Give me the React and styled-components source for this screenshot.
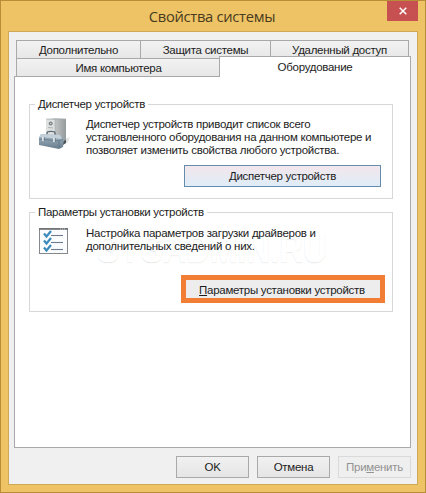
import React from 'react';
import styled, { createGlobalStyle } from 'styled-components';

const App = () => {
  return (
    <>
      <GlobalStyle />
      <Window>
        <TitleBar>
          <Title>Свойства системы</Title>
          <CloseButton aria-label="Закрыть">
            <svg width="8" height="8" viewBox="0 0 8 8">
              <path d="M0.7 0.7L7.3 7.3M7.3 0.7L0.7 7.3" stroke="#fff" strokeWidth="1.5" />
            </svg>
          </CloseButton>
        </TitleBar>
        <Client>
          <BackTabs>
            <Tab $width={124}>Дополнительно</Tab>
            <Tab $width={130}>Защита системы</Tab>
            <Tab $width={139}>Удаленный доступ</Tab>
          </BackTabs>
          <FrontTabs>
            <Tab $width={204}>Имя компьютера</Tab>
            <ActiveTab>Оборудование</ActiveTab>
          </FrontTabs>
          <Panel>
            <Group $height={95}>
              <Legend>Диспетчер устройств</Legend>
              <Info>
                <IconBox><DeviceIcon /></IconBox>
                <Description>
                  Диспетчер устройств приводит список всего<br />
                  установленного оборудования на данном компьютере и<br />
                  позволяет изменить свойства любого устройства.
                </Description>
              </Info>
              <Actions>
                <Button $width={197} $primary>Диспетчер устройств</Button>
              </Actions>
            </Group>
            <Group $height={100}>
              <Legend>Параметры установки устройств</Legend>
              <Watermark>SYSADMIN.RU</Watermark>
              <Info $top={7}>
                <IconBox $top={2}><ChecklistIcon /></IconBox>
                <Description>
                  Настройка параметров загрузки драйверов и<br />
                  дополнительных сведений о них.
                </Description>
              </Info>
              <HighlightActions>
                <Highlight>
                  <span><u>П</u>араметры установки устройств</span>
                </Highlight>
              </HighlightActions>
            </Group>
          </Panel>
          <Footer>
            <Button $width={73}>OK</Button>
            <Button $width={73}>Отмена</Button>
            <Button $width={73} disabled><span>При<u>м</u>енить</span></Button>
          </Footer>
        </Client>
      </Window>
    </>
  )
}

export default App;

// Server tower with a toolbox in front of it
const DeviceIcon = () => (
  <svg width="33" height="34" viewBox="0 0 33 34">
    <defs>
      <linearGradient id="tower" x1="0" x2="1">
        <stop offset="0" stopColor="#d5d8d8" />
        <stop offset="0.55" stopColor="#b9bdbe" />
        <stop offset="1" stopColor="#94999b" />
      </linearGradient>
      <linearGradient id="toolbox" x1="0" x2="0" y1="0" y2="1">
        <stop offset="0" stopColor="#a9bac7" />
        <stop offset="1" stopColor="#667b8b" />
      </linearGradient>
    </defs>
    <path d="M27 22L32 20L30 25L27 27Z" fill="#e2e4e4" />
    <path d="M8 2L17 1L28 2V25L20 28L8 25Z" fill="url(#tower)" />
    <path d="M8 2L17 2.5V27L8 25Z" fill="#dfe1e0" />
    <path d="M8 2L17 2.5L28 2M17 2.5V27" fill="none" stroke="#a5abad" strokeWidth="0.6" />
    <circle cx="12.7" cy="6.5" r="2" fill="#7c8384" />
    <circle cx="12.7" cy="6.5" r="0.8" fill="#c9cfc9" />
    <path d="M10 10.5L15 11" stroke="#aeb3b3" />
    <path d="M25 24L28 23V26L25 28Z" fill="#4d5357" />
    <path d="M9 18V16C9 13.8 17 13.8 17 16V19" fill="none" stroke="#5c6a75" strokeWidth="1.4" />
    <path d="M3 17L22 18L26 22L25 30L21 32L1 28V21Z" fill="url(#toolbox)" />
    <path d="M3 17L22 18L24 22L1 20Z" fill="#c3d0d9" />
    <path d="M1 22L21 24L25 22M21 24V31" fill="none" stroke="#607484" strokeWidth="0.8" />
    <path d="M5 20V24M16 21V25" stroke="#eef2f4" strokeWidth="1.6" />
    <path d="M6.3 20V24M17.3 21V25" stroke="#607484" strokeWidth="0.7" />
  </svg>
);

const ChecklistIcon = () => (
  <svg width="31" height="27" viewBox="0 0 31 27">
    <rect x="1.5" y="0.5" width="28" height="25" fill="#fbfcfd" stroke="#85898d" />
    <path d="M1 1H30" stroke="#6c7074" strokeWidth="1.6" />
    <path d="M22 1H28" stroke="#c9ccce" strokeWidth="0.9" strokeDasharray="1 1" />
    {[7, 14, 21].map((y) => (
      <g key={y}>
        <path d={`M6 ${y - 1.5}L8.5 ${y + 1.5}L13 ${y - 4}`} fill="none" stroke="#3b8abb" strokeWidth="2.2" />
        <path d={`M13 ${y + 0.5}H25`} stroke="#6d7a91" strokeWidth="1.1" />
      </g>
    ))}
  </svg>
);

const GlobalStyle = createGlobalStyle`
  * {
    box-sizing: border-box;
  }
  body {
    margin: 0;
    overflow: hidden;
    font-family: "Liberation Sans", Arial, sans-serif;
    font-size: 11.5px;
    letter-spacing: -0.28px;
    color: #1c1c1c;
  }
`;

const Window = styled.div`
  width: 426px;
  height: 493px;
  display: flex;
  flex-direction: column;
  padding: 0 7px 7px;
  background: #eec365;
  border: 1px solid #b78d38;
`;

const TitleBar = styled.header`
  position: relative;
  height: 30px;
  flex: none;
  display: flex;
  justify-content: center;
`;

const Title = styled.h1`
  margin: 0;
  padding-right: 2px;
  font: 400 14.7px/30px "Open Sans", sans-serif;
  white-space: nowrap;
  color: #493b20;
`;

const CloseButton = styled.button`
  position: absolute;
  top: 0;
  right: 0;
  width: 31px;
  height: 20px;
  padding: 0;
  display: flex;
  align-items: center;
  justify-content: center;
  background: #c75050;
  border: none;
`;

const Client = styled.main`
  flex: 1;
  display: flex;
  flex-direction: column;
  padding: 8px 6px 0 5px;
  background: #f0f0f0;
  border: 1px solid #cfa957;
`;

const BackTabs = styled.div`
  display: flex;
  height: 18px;
  padding-left: 2px;
`;

const FrontTabs = styled.div`
  display: flex;
  height: 18px;
  padding-left: 2px;
`;

const Tab = styled.div`
  width: ${({ $width }) => $width}px;
  flex: none;
  display: flex;
  align-items: center;
  justify-content: center;
  background: linear-gradient(#f2f2f2, #e7e7e7);
  border: 1px solid #a9a9ac;
  border-right-width: 0;
  border-bottom: none;
  white-space: nowrap;
  &:last-child {
    border-right-width: 1px;
  }
`;

const ActiveTab = styled.div`
  flex: 1;
  height: 21px;
  margin: -2px 0 0 -1px;
  z-index: 1;
  display: flex;
  align-items: center;
  justify-content: center;
  background: #fff;
  border: 1px solid #a9a9ac;
  border-bottom: none;
`;

const Panel = styled.section`
  height: 372px;
  padding: 27px 17px 0 14px;
  display: flex;
  flex-direction: column;
  gap: 13px;
  background: #fff;
  border: 1px solid #a9a9ac;
`;

const Group = styled.div`
  position: relative;
  height: ${({ $height }) => $height}px;
  display: flex;
  flex-direction: column;
  border: 1px solid #d8d8da;
`;

const Legend = styled.h2`
  align-self: flex-start;
  height: 14px;
  margin: -8px 0 0 5px;
  padding: 0 3px;
  font: inherit;
  line-height: 15px;
  background: #fff;
  white-space: nowrap;
`;

const Info = styled.div`
  position: relative;
  height: 53px;
  display: flex;
  padding: ${({ $top = 6 }) => $top}px 0 0 8px;
`;

const IconBox = styled.div`
  width: 48px;
  flex: none;
  padding-top: ${({ $top = 0 }) => $top}px;
`;

const Description = styled.p`
  margin: 0;
  padding-top: 1px;
  line-height: 13px;
  white-space: nowrap;
`;

const Actions = styled.div`
  display: flex;
  justify-content: flex-end;
  padding: 1px 11px 0 0;
`;

const HighlightActions = styled(Actions)`
  padding: 3px 7px 0 0;
`;

const Button = styled.button`
  width: ${({ $width }) => $width}px;
  height: 22px;
  padding: 0;
  display: flex;
  align-items: center;
  justify-content: center;
  font: inherit;
  letter-spacing: inherit;
  white-space: nowrap;
  color: ${({ disabled }) => (disabled ? '#929292' : '#1c1c1c')};
  background: ${({ $primary, disabled }) =>
    $primary ? 'linear-gradient(#f4e6ec, #deedf8)' : disabled ? '#efefef' : 'linear-gradient(#f1f1f1, #e5e5e5)'};
  border: 1px solid ${({ $primary, disabled }) => ($primary ? '#658cab' : disabled ? '#dadada' : '#a9a9a9')};
`;

const Highlight = styled.button`
  width: 204px;
  height: 28px;
  padding: 1px 2px 0 0;
  font: inherit;
  letter-spacing: inherit;
  color: inherit;
  white-space: nowrap;
  background: #ededee;
  border: 5px solid #f27e35;
`;

const Watermark = styled.div`
  position: absolute;
  top: 13px;
  left: 67px;
  font: 700 41px/44px "Liberation Sans", sans-serif;
  letter-spacing: 0;
  color: #fff;
  -webkit-text-stroke: 1px #fff;
  text-shadow: 0 1px 1px #dadada;
  transform: scaleX(0.8);
  transform-origin: left;
`;

const Footer = styled.footer`
  display: flex;
  justify-content: flex-end;
  gap: 8px;
  padding-top: 8px;
`;
